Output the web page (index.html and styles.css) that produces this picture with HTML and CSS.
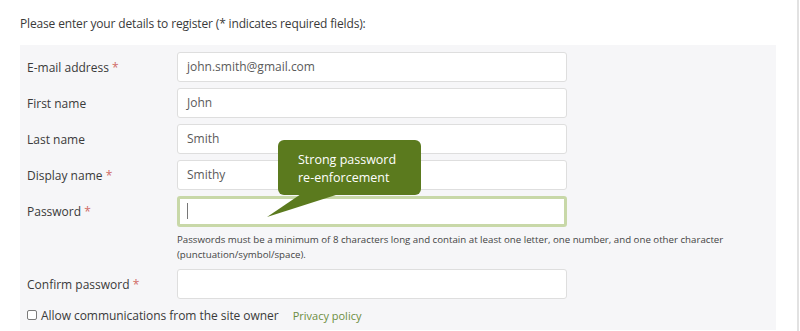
FILE: index.html
```html
<!DOCTYPE html>
<html>
<head>
<meta charset="utf-8">
<link rel="stylesheet" href="styles.css">
</head>
<body>
<div class="page">
  <p class="intro">Please enter your details to register (* indicates required fields):</p>
  <div class="panel">
    <div class="grid">
      <label class="lbl">E-mail address <span class="req">*</span></label>
      <div class="field">john.smith@gmail.com</div>
      <label class="lbl">First name</label>
      <div class="field">John</div>
      <label class="lbl">Last name</label>
      <div class="field">Smith</div>
      <label class="lbl">Display name <span class="req">*</span></label>
      <div class="field">Smithy</div>
      <label class="lbl">Password <span class="req">*</span></label>
      <div class="field focus"><span class="caret"></span></div>
      <div></div>
      <div class="help">Passwords must be a minimum of 8 characters long and contain at least one letter, one number, and one other character (punctuation/symbol/space).</div>
      <label class="lbl">Confirm password <span class="req">*</span></label>
      <div class="field"></div>
    </div>
    <div class="consent">
      <span class="box"></span>
      <span class="ctext">Allow communications from the site owner</span>
      <span class="plink">Privacy policy</span>
    </div>
    <div class="callout">
      <div class="bubble">Strong password<br>re-enforcement</div>
      <svg class="tail" width="80" height="24" viewBox="0 0 80 24"><polygon points="34,0 72,0 0,23" fill="#5b7a1e"/></svg>
    </div>
  </div>
  <div class="edge"></div>
</div>
</body>
</html>
```
FILE: styles.css
```css
* { box-sizing: border-box; }
html, body { margin: 0; padding: 0; background: #fff; }
body {
  font-family: "Open Sans", "Noto Sans", sans-serif;
  color: #3a3a3a;
  width: 800px;
  height: 331px;
  overflow: hidden;
}
.page { position: relative; padding: 15px 0 0 20px; width: 800px; height: 331px; }
.intro { margin: 0 0 12px 0; font-size: 12px; line-height: 18px; letter-spacing: -0.15px; }
.panel {
  position: relative;
  width: 756px;
  background: #f6f6f8;
  padding: 7px 0 5px 7px;
}
.grid {
  display: grid;
  grid-template-columns: 150px 390px;
  row-gap: 6px;
  align-items: center;
}
.lbl { font-size: 12px; color: #3a3a3a; }
.req { color: #d06a66; }
.field {
  height: 30px;
  background: #fff;
  border: 1px solid #dedede;
  border-radius: 3px;
  padding: 0 9px;
  font-size: 12px;
  line-height: 28px;
  color: #5a5a5a;
}
.field.focus {
  border: 3px solid #c8d8a8;
  position: relative;
  height: 31px;
}
.caret {
  position: absolute;
  left: 7px; top: 4px;
  width: 1px; height: 16px;
  background: #777;
}
.help {
  font-size: 9.7px;
  line-height: 15px;
  color: #444;
  width: 560px;
  margin: -1px 0 1px 0;
}
.consent {
  display: flex;
  align-items: center;
  height: 20px;
  margin-top: 6px;
  font-size: 12px;
}
.box {
  width: 10px; height: 10px;
  border: 1px solid #7a7a7a;
  border-radius: 2px;
  background: #fff;
  margin-right: 4px;
}
.ctext { color: #3a3a3a; letter-spacing: -0.05px; }
.plink { color: #6d8d3e; margin-left: 14px; font-size: 11px; }
.callout { position: absolute; left: 258px; top: 95px; }
.bubble {
  width: 143px; height: 55px;
  background: #5b7a1e;
  border-radius: 6px;
  color: #fff;
  font-size: 12.5px;
  line-height: 18px;
  padding: 11px 0 0 20px;
}
.tail { position: absolute; left: -11px; top: 54px; }
.edge { position: absolute; left: 797px; top: 0; width: 2px; height: 331px; background: #e2e2e2; }
```
